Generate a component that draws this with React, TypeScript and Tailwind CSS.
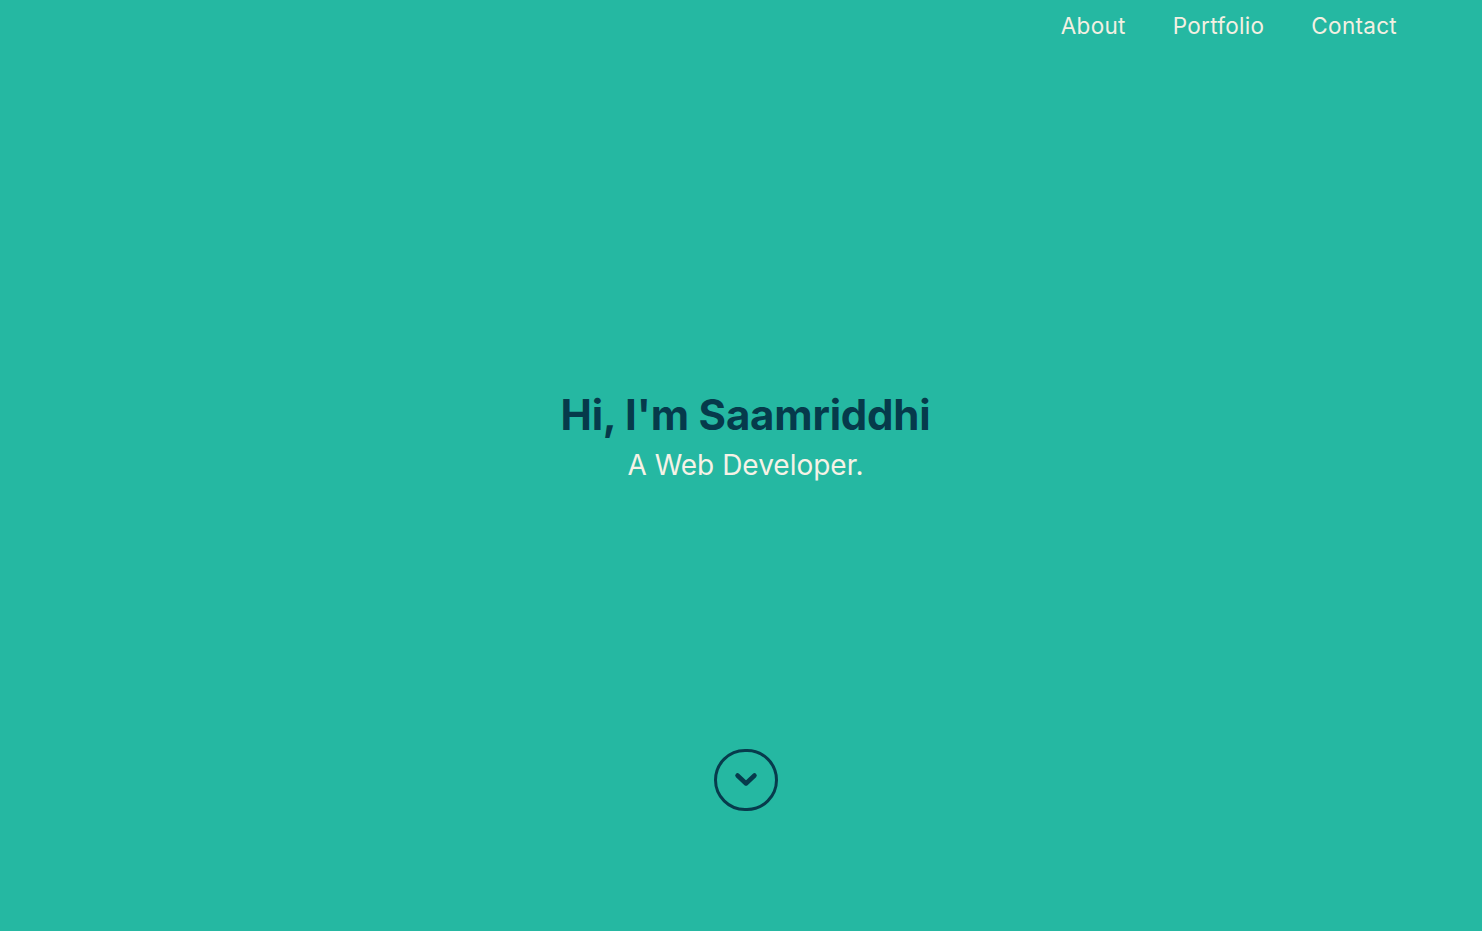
const navItems = ['About', 'Portfolio', 'Contact'];

const App = () => {
  return (
    <div
      className="flex flex-col h-[931px] bg-[#25b8a2] overflow-hidden"
      style={{ fontFamily: 'Inter, "Open Sans", sans-serif' }}>
      {/* 네비게이션 */}
      <nav className="flex justify-end gap-[47px] pr-[85px] pt-[9px]">
        {navItems.map((item) => (
          <a
            key={item}
            href="#"
            className="text-[22.5px] text-[#f4f0e2] tracking-[0.3px] hover:text-white">
            {item}
          </a>
        ))}
      </nav>

      {/* 소개 */}
      <div className="flex flex-col items-center pl-[9px] pt-[347px]">
        <h1 className="text-[42px] font-bold text-[#063a4b] leading-[50px] tracking-[-0.2px]">
          Hi, I'm Saamriddhi
        </h1>
        <p className="text-[28px] text-[#f6f2e6] leading-[38px] mt-[6px]">
          A Web Developer.
        </p>
      </div>

      {/* 스크롤 버튼 */}
      <div className="flex justify-center pl-[9px] mt-[265px]">
        <button className="flex items-center justify-center w-[64px] h-[62px] rounded-full border-[3px] border-[#073b4c] cursor-pointer">
          <svg width="24" height="16" viewBox="0 0 24 16" className="mt-[1px]">
            <polyline
              points="3.5,3.5 12,11.5 20.5,3.5"
              fill="none"
              stroke="#073b4c"
              strokeWidth="4.5"
              strokeLinecap="round"
              strokeLinejoin="round"
            />
          </svg>
        </button>
      </div>
    </div>
  );
};

export default App;
